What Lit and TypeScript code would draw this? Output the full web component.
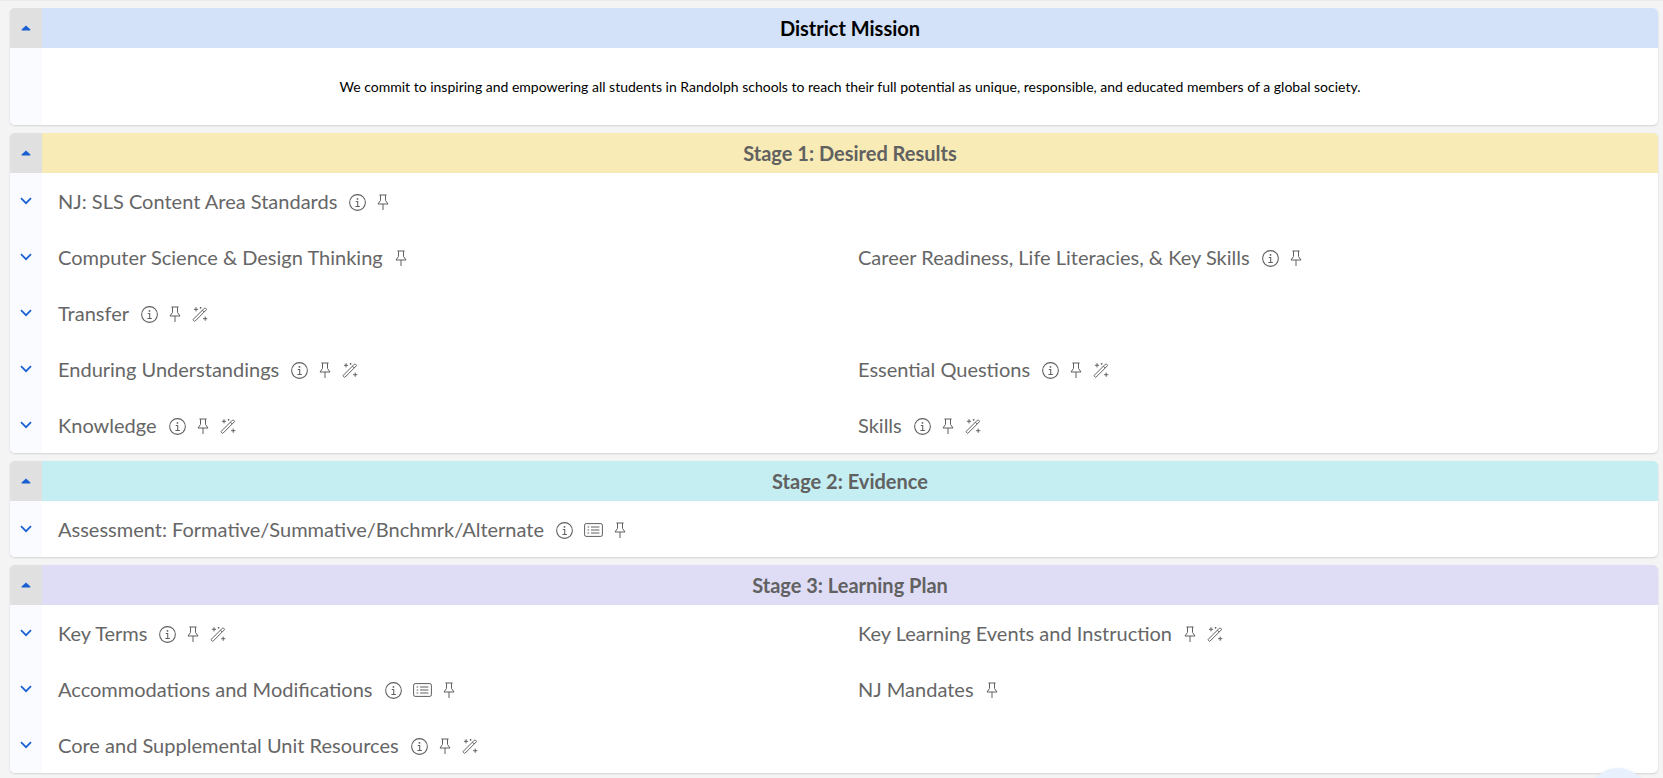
import { css, html, LitElement, svg } from 'lit';
import { customElement } from 'lit/decorators.js';

type Tool = 'info' | 'pin' | 'wand' | 'list';
type Item = { label: string; tools: Tool[] };
type Section = { title: string; tone: string; rows: Item[][] };

const icons = {
  info: svg`<circle cx="8" cy="8" r="7.4" /><path d="M6.4 7H8.2V11.7M6 11.7H10.2" /><circle class="dot" cx="8" cy="4.6" r=".85" />`,
  pin: svg`<path d="M2.4 1H9.6M3.5 1V6.4L1 10H11L8.5 6.4V1M6 10V16" />`,
  wand: svg`<path d="M1.4 13.2L12.4 2.2Q13 1.6 13.6 2.2L14.2 2.8Q14.8 3.4 14.2 4L3.2 15Q2.6 15.6 2 15L1.4 14.4Q.8 13.8 1.4 13.2ZM10.4 4.2L12.2 6" /><path d="M4 1.2V5.4M1.9 3.3H6.1M13.2 10.6V14.8M11.1 12.7H15.3M8.6 1V2.6M7.8 1.8H9.4" />`,
  list: svg`<rect x=".6" y="1.6" width="17.8" height="12.8" rx="1.6" /><path d="M3.6 5H5.2M7 5H15.4M3.6 8H5.2M7 8H15.4M3.6 11H5.2M7 11H15.4" />`,
};

const boxes: Record<Tool, number> = { info: 16, pin: 12, wand: 16, list: 19 };

const sections: Section[] = [
  {
    title: 'Stage 1: Desired Results',
    tone: 'yellow',
    rows: [
      [{ label: 'NJ: SLS Content Area Standards', tools: ['info', 'pin'] }],
      [
        { label: 'Computer Science & Design Thinking', tools: ['pin'] },
        { label: 'Career Readiness, Life Literacies, & Key Skills', tools: ['info', 'pin'] },
      ],
      [{ label: 'Transfer', tools: ['info', 'pin', 'wand'] }],
      [
        { label: 'Enduring Understandings', tools: ['info', 'pin', 'wand'] },
        { label: 'Essential Questions', tools: ['info', 'pin', 'wand'] },
      ],
      [
        { label: 'Knowledge', tools: ['info', 'pin', 'wand'] },
        { label: 'Skills', tools: ['info', 'pin', 'wand'] },
      ],
    ],
  },
  {
    title: 'Stage 2: Evidence',
    tone: 'cyan',
    rows: [[{ label: 'Assessment: Formative/Summative/Bnchmrk/Alternate', tools: ['info', 'list', 'pin'] }]],
  },
  {
    title: 'Stage 3: Learning Plan',
    tone: 'violet',
    rows: [
      [
        { label: 'Key Terms', tools: ['info', 'pin', 'wand'] },
        { label: 'Key Learning Events and Instruction', tools: ['pin', 'wand'] },
      ],
      [
        { label: 'Accommodations and Modifications', tools: ['info', 'list', 'pin'] },
        { label: 'NJ Mandates', tools: ['pin'] },
      ],
      [{ label: 'Core and Supplemental Unit Resources', tools: ['info', 'pin', 'wand'] }],
    ],
  },
];

@customElement('app-root')
export class AppRoot extends LitElement {
  private caret() {
    return html`<svg class="caret" viewBox="0 0 10 6"><path d="M5 .4L9.4 4.6Q9.8 5.6 8.8 5.6H1.2Q.2 5.6 .6 4.6Z" /></svg>`;
  }

  private item(item: Item) {
    return html`<div class="item">
      <span class="label">${item.label}</span>
      <span class="tools">
        ${item.tools.map(
          (t) => html`<svg class="tool ${t}" viewBox="0 0 ${boxes[t]} 16">${icons[t]}</svg>`,
        )}
      </span>
    </div>`;
  }

  private row(items: Item[]) {
    return html`<div class="row">
      <div class="gutter">
        <svg class="chevron" viewBox="0 0 12 8"><path d="M1 1.2L6 6.2L11 1.2" /></svg>
      </div>
      ${items.map((i) => this.item(i))}
    </div>`;
  }

  protected render() {
    return html`
      <div class="page">
        <section class="card">
          <header class="head blue">
            <div class="toggle">${this.caret()}</div>
            <h2 class="strong">District Mission</h2>
          </header>
          <div class="mission">
            <div class="gutter"></div>
            <p>
              We commit to inspiring and empowering all students in Randolph schools to reach their full
              potential as unique, responsible, and educated members of a global society.
            </p>
          </div>
        </section>
        ${sections.map(
          (s) => html`<section class="card">
            <header class="head ${s.tone}">
              <div class="toggle">${this.caret()}</div>
              <h2>${s.title}</h2>
            </header>
            ${s.rows.map((r) => this.row(r))}
          </section>`,
        )}
      </div>
      <div class="fab"></div>
    `;
  }

  static styles = css`
    :host {
      display: block;
      height: 778px;
      overflow: hidden;
      position: relative;
      background: #f4f4f4;
      font-family: 'Lato', sans-serif;
    }

    .page {
      display: flex;
      flex-direction: column;
      gap: 8px;
      padding: 7px 5px 0 10px;
      border-top: 1px solid #ebebeb;
    }

    .card {
      background: #fff;
      border-radius: 5px;
      overflow: hidden;
      box-shadow: 0 1px 2px rgba(0, 0, 0, 0.14);
    }

    .head {
      display: flex;
      height: 40px;
      align-items: center;
    }

    .blue {
      background: #d4e2f9;
    }
    .yellow {
      background: #f8ebb5;
    }
    .cyan {
      background: #c5eef2;
    }
    .violet {
      background: #dfdcf6;
    }

    .toggle {
      width: 32px;
      height: 100%;
      flex: none;
      background: #e0e0e0;
      display: flex;
      align-items: center;
      justify-content: center;
    }

    .caret {
      width: 10px;
      height: 6px;
      fill: #1a5fd0;
    }

    h2 {
      flex: 1;
      margin: 0;
      text-align: center;
      font-size: 20px;
      font-weight: 700;
      color: #616161;
    }

    h2.strong {
      color: #000;
    }

    .mission {
      display: flex;
      height: 77px;
    }

    .mission p {
      flex: 1;
      margin: 0;
      display: flex;
      align-items: center;
      justify-content: center;
      font-size: 14px;
      color: #000;
    }

    .gutter {
      width: 32px;
      flex: none;
      background: #fafbff;
      display: flex;
      align-items: center;
      justify-content: center;
    }

    .chevron {
      width: 12px;
      height: 8px;
      fill: none;
      stroke: #1a5fd0;
      stroke-width: 1.7;
    }

    .row {
      display: grid;
      grid-template-columns: 32px 800px 1fr;
      height: 56px;
    }

    .item {
      display: flex;
      align-items: center;
      padding-left: 16px;
      gap: 12px;
      color: #666;
      font-size: 20px;
    }

    .tools {
      display: flex;
      align-items: center;
      gap: 11px;
      padding-top: 2px;
    }

    .tool {
      height: 16px;
      width: 16px;
      fill: none;
      stroke: #5f5f5f;
      stroke-width: 1;
    }

    .tool.info {
      height: 17px;
      width: 17px;
    }

    .tool.pin {
      width: 12px;
    }

    .tool.list {
      width: 19px;
    }

    .tool .dot {
      fill: #5f5f5f;
      stroke: none;
    }

    .fab {
      position: absolute;
      left: 1588px;
      top: 768px;
      width: 60px;
      height: 60px;
      border-radius: 50%;
      background: #e8f0fe;
      box-shadow: 0 1px 4px rgba(0, 0, 0, 0.06);
    }
  `;
}

declare global {
  interface HTMLElementTagNameMap {
    'app-root': AppRoot;
  }
}
